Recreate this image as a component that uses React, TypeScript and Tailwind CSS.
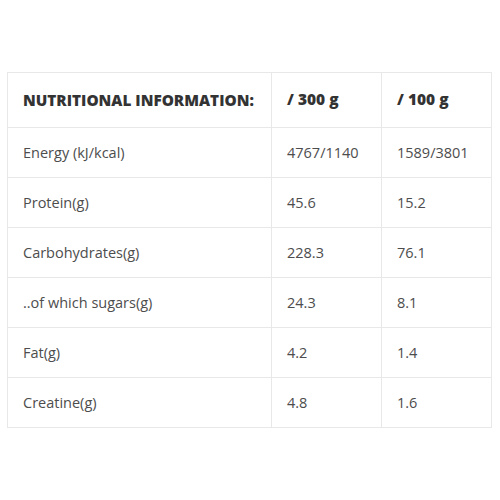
const rows = [
  ["Energy (kJ/kcal)", "4767/1140", "1589/3801"],
  ["Protein(g)", "45.6", "15.2"],
  ["Carbohydrates(g)", "228.3", "76.1"],
  ["..of which sugars(g)", "24.3", "8.1"],
  ["Fat(g)", "4.2", "1.4"],
  ["Creatine(g)", "4.8", "1.6"],
];

export default function App() {
  return (
    <div className="w-[500px] h-[500px] bg-white pt-[72px] pl-[7px]">
      <table className="w-[485px] border-collapse font-['Open_Sans',sans-serif] text-[14.5px] text-[#4d4d4d]">
        <thead>
          <tr className="h-[55px]">
            <th className="w-[264px] border border-[#e8e8e8] pl-[15px] text-left text-[15.3px] font-extrabold text-[#333]">
              NUTRITIONAL INFORMATION:
            </th>
            <th className="w-[110px] border border-[#e8e8e8] pl-[15px] text-left text-[15.5px] font-extrabold text-[#333]">/ 300 g</th>
            <th className="border border-[#e8e8e8] pl-[15px] text-left text-[15.5px] font-extrabold text-[#333]">/ 100 g</th>
          </tr>
        </thead>
        <tbody>
          {rows.map((r) => (
            <tr key={r[0]} className="h-[50px]">
              <td className="border border-[#e8e8e8] pl-[15px]">{r[0]}</td>
              <td className="border border-[#e8e8e8] pl-[15px]">{r[1]}</td>
              <td className="border border-[#e8e8e8] pl-[15px]">{r[2]}</td>
            </tr>
          ))}
        </tbody>
      </table>
    </div>
  );
}
